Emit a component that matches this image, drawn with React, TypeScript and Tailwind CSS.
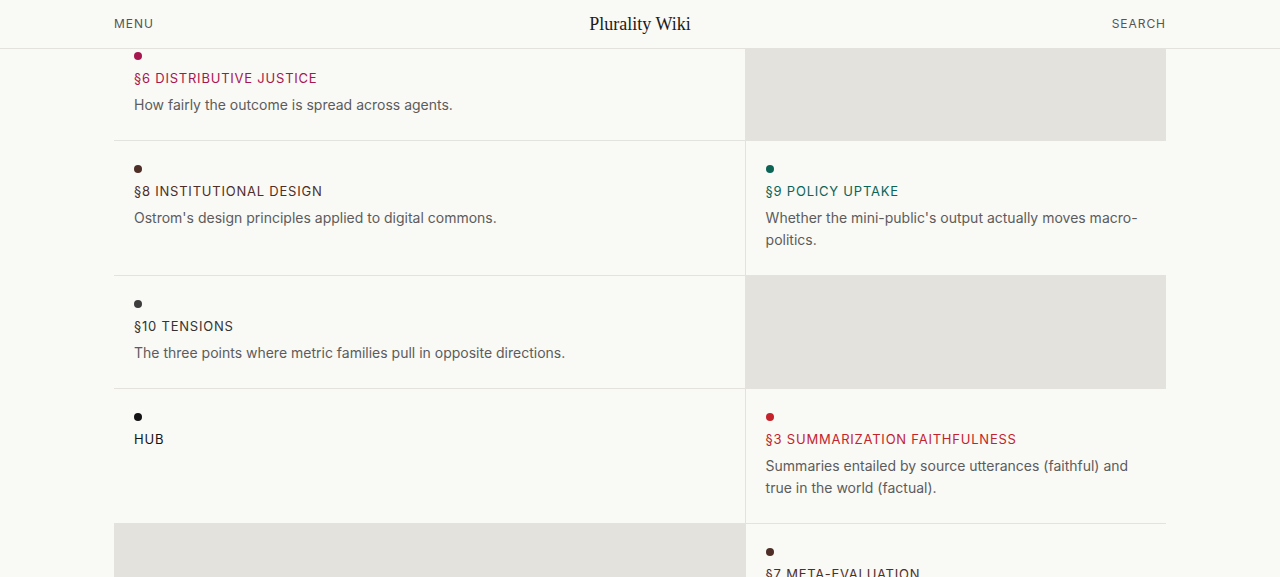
import React from "react";

interface Entry {
    dot: string;
    color: string;
    title: string;
    desc?: string;
}

type Cell = Entry | null;

const CELLS: Cell[] = [
    {
        dot: "bg-[#a8164f]",
        color: "text-[#a8164f]",
        title: "§6 Distributive Justice",
        desc: "How fairly the outcome is spread across agents.",
    },
    null,
    {
        dot: "bg-[#4f2e27]",
        color: "text-[#4f2e27]",
        title: "§8 Institutional Design",
        desc: "Ostrom's design principles applied to digital commons.",
    },
    {
        dot: "bg-[#0c6455]",
        color: "text-[#0c6455]",
        title: "§9 Policy Uptake",
        desc: "Whether the mini-public's output actually moves macro-politics.",
    },
    {
        dot: "bg-[#3d3d3d]",
        color: "text-[#333333]",
        title: "§10 Tensions",
        desc: "The three points where metric families pull in opposite directions.",
    },
    null,
    {
        dot: "bg-[#141414]",
        color: "text-[#141414]",
        title: "Hub",
    },
    {
        dot: "bg-[#c4232b]",
        color: "text-[#c4232b]",
        title: "§3 Summarization Faithfulness",
        desc: "Summaries entailed by source utterances (faithful) and true in the world (factual).",
    },
    null,
    {
        dot: "bg-[#4f2e27]",
        color: "text-[#4f2e27]",
        title: "§7 Meta-Evaluation",
        desc: "Evaluating the evaluators: are the metrics themselves reliable?",
    },
];

function EntryCell({ entry }: { entry: Cell }) {
    if (!entry) return <div className="bg-[#e4e2dd]" />;
    return (
        <div className="bg-[#f9f9f6] px-5 pt-6 pb-6">
            <div className={`w-2 h-2 rounded-full ${entry.dot}`} />
            <div
                className={`mt-[9px] text-[13px] leading-[18px] uppercase tracking-[0.06em] ${entry.color}`}
            >
                {entry.title}
            </div>
            {entry.desc && (
                <p className="mt-[7px] text-[14px] leading-[22px] text-[#5c5c5c]">
                    {entry.desc}
                </p>
            )}
        </div>
    );
}

export default function App() {
    return (
        <div
            className="min-h-screen bg-[#f9f9f6] text-[#222]"
            style={{ fontFamily: "Inter, 'Noto Sans', sans-serif" }}
        >
            <header className="fixed top-0 inset-x-0 z-10 h-[49px] bg-[#f9f9f6] border-b border-[#e4e2dd]">
                <div className="mx-auto w-[1052px] h-12 grid grid-cols-[1fr_auto_1fr] items-center">
                    <button className="justify-self-start text-[12px] tracking-[0.08em] text-[#555]">
                        MENU
                    </button>
                    <div className="font-['Liberation_Serif',serif] text-[18px] text-[#1c1c1c]">
                        Plurality Wiki
                    </div>
                    <button className="justify-self-end text-[12px] tracking-[0.08em] text-[#555]">
                        SEARCH
                    </button>
                </div>
            </header>

            <main className="pt-7 h-[577px] overflow-hidden">
                <div className="mx-auto w-[1052px] grid grid-cols-[3fr_2fr] gap-px bg-[#e4e2dd]">
                    {CELLS.map((c, i) => (
                        <EntryCell key={i} entry={c} />
                    ))}
                </div>
            </main>
        </div>
    );
}
